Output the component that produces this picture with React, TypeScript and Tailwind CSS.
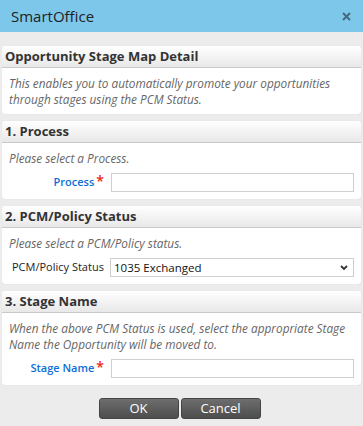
import React from "react";

const font = { fontFamily: '"Open Sans", "Liberation Sans", sans-serif' };

const Section = ({ title, children }: { title: string; children: React.ReactNode }) => (
  <div className="rounded-[3px] bg-white shadow-[0_0_1px_rgba(0,0,0,0.15)]">
    <div className="h-[22px] flex items-center px-[3px] bg-gradient-to-b from-white to-[#e8e8e8] border-b border-[#c9c9c9] rounded-t-[3px]">
      <h2 className="text-[13px] font-bold text-[#333]">{title}</h2>
    </div>
    <div className="px-[7px] pt-[7px] pb-[7px]">{children}</div>
  </div>
);

const Hint = ({ children }: { children: React.ReactNode }) => (
  <p className="text-[11.8px] italic text-[#666] leading-[16px]">{children}</p>
);

const Field = ({ label }: { label: string }) => (
  <div className="flex items-center mt-[7px]">
    <label className="w-[102px] shrink-0 text-right pr-[7px] text-[11px] font-semibold text-[#0d6fd6] flex justify-end items-start whitespace-nowrap">
      {label}
      <span className="text-[#e22] text-[14px] leading-[14px] ml-[2px]">*</span>
    </label>
    <input className="flex-1 h-[19px] border border-[#cfcfcf] bg-white outline-none" />
  </div>
);

export default function App() {
  return (
    <div style={font} className="w-[363px] h-[426px] bg-[#ececec] flex flex-col overflow-hidden">
      <div className="h-[32px] shrink-0 bg-[#7dc7ea] flex items-center justify-between pl-[11px] pr-[12px]">
        <span className="text-[15px] text-[#222]">SmartOffice</span>
        <svg width="9" height="9" viewBox="0 0 9 9">
          <path d="M1 1L8 8M8 1L1 8" stroke="#45697d" strokeWidth="2" />
        </svg>
      </div>

      <div className="flex flex-col gap-[7px] px-[2px] pt-[14px]">
        <Section title="Opportunity Stage Map Detail">
          <Hint>
            This enables you to automatically promote your opportunities through stages using the PCM Status.
          </Hint>
        </Section>

        <Section title="1. Process">
          <Hint>Please select a Process.</Hint>
          <Field label="Process" />
        </Section>

        <Section title="2. PCM/Policy Status">
          <Hint>Please select a PCM/Policy status.</Hint>
          <div className="flex items-center mt-[7px]">
            <span className="w-[101px] shrink-0 pl-[3px] text-[11px] text-[#222] whitespace-nowrap">PCM/Policy Status</span>
            <div className="flex-1 h-[19px] border border-[#cfcfcf] bg-white flex items-center justify-between pl-[3px] pr-[5px]">
              <span className="text-[11.5px] text-[#111]">1035 Exchanged</span>
              <svg width="8" height="6" viewBox="0 0 8 6">
                <path d="M1 1L4 4L7 1" stroke="#333" strokeWidth="1.8" fill="none" />
              </svg>
            </div>
          </div>
        </Section>

        <Section title="3. Stage Name">
          <Hint>
            When the above PCM Status is used, select the appropriate Stage Name the Opportunity will be moved to.
          </Hint>
          <Field label="Stage Name" />
        </Section>
      </div>

      <div className="flex justify-center gap-[2px] mt-[13px] pr-[4px]">
        <button className="w-[80px] h-[21px] rounded-[3px] bg-gradient-to-b from-[#6e6e6e] to-[#4d4d4d] text-white text-[13px] leading-none border border-[#444]">
          OK
        </button>
        <button className="w-[80px] h-[21px] rounded-[3px] bg-gradient-to-b from-[#6e6e6e] to-[#4d4d4d] text-white text-[13px] leading-none border border-[#444]">
          Cancel
        </button>
      </div>
    </div>
  );
}
